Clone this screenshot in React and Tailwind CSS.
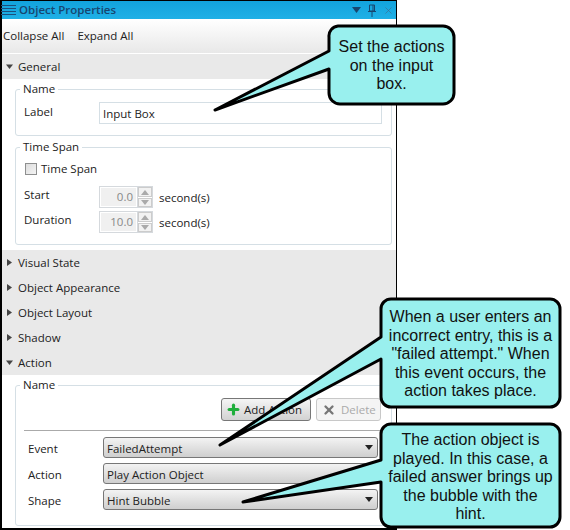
import { Plus, X } from 'lucide-react';

const uiFont = "font-['Open_Sans',sans-serif] text-[11.5px] text-[#222]";
const calloutText = "absolute text-center font-['Liberation_Sans',sans-serif] text-[16px] leading-[18.5px] text-[#111]";

function SectionHeader({ label, open }) {
    return (
        <div className="flex h-[25px] items-center bg-[#e9e9e9] pl-[3px]">
            {open ? (
                <svg width="9" height="9" viewBox="0 0 9 9" className="mr-[4px]"><path d="M1 2.5h7L4.5 7z" fill="#444" /></svg>
            ) : (
                <svg width="9" height="9" viewBox="0 0 9 9" className="mr-[4px]"><path d="M2 1v7l5-3.5z" fill="#444" /></svg>
            )}
            <span>{label}</span>
        </div>
    );
}

function Group({ title, className, children }) {
    return (
        <div className={`relative ml-[13px] mr-[4px] rounded-[3px] border border-[#d5dfe5] ${className}`}>
            <span className="absolute left-[4px] top-[-9px] bg-white px-[3px] leading-[16px]">{title}</span>
            {children}
        </div>
    );
}

function Spinner({ value }) {
    return (
        <div className="flex h-[22px] w-[54px] border border-[#d5d9dd] bg-white">
            <div className="m-px flex-1 bg-[#f0f0f0] pr-[3px] text-right leading-[18px] text-[#888]">{value}</div>
            <div className="flex w-[15px] flex-col gap-px border-l border-[#d5d9dd]">
                <div className="flex flex-1 items-center justify-center border border-[#ccc] bg-[#f2f2f2]">
                    <svg width="8" height="5" viewBox="0 0 8 5"><path d="M4 0l4 5H0z" fill="#aaa" /></svg>
                </div>
                <div className="flex flex-1 items-center justify-center border border-[#ccc] bg-[#f2f2f2]">
                    <svg width="8" height="5" viewBox="0 0 8 5"><path d="M0 0h8L4 5z" fill="#aaa" /></svg>
                </div>
            </div>
        </div>
    );
}

function SpinRow({ label, value, className }) {
    return (
        <div className={`flex items-center ${className}`}>
            <span className="mt-[-6px] w-[83px] pl-[8px]">{label}</span>
            <Spinner value={value} />
            <span className="ml-[6px]">second(s)</span>
        </div>
    );
}

function Select({ label, value, className }) {
    return (
        <div className={`flex items-center ${className}`}>
            <span className="w-[87px] pl-[12px] pt-[2px]">{label}</span>
            <div className="flex h-[21px] w-[275px] items-center justify-between rounded-[3px] border border-[#777] bg-gradient-to-b from-[#f3f3f3] to-[#cfcfcf] pl-[3px] pr-[4px]">
                <span className="pt-[2px]">{value}</span>
                <svg width="8" height="5" viewBox="0 0 8 5"><path d="M0 0h8L4 5z" fill="#222" /></svg>
            </div>
        </div>
    );
}

export default function App() {
    return (
        <div className="relative h-[530px] w-[570px] overflow-hidden bg-white">
            {/* Panel */}
            <div className={`flex h-[530px] w-[397px] flex-col border-b-2 border-l-2 border-r border-black ${uiFont}`}>
                <div className="flex h-[19px] shrink-0 items-center border-t border-black bg-gradient-to-b from-[#12a3dd] to-[#1fb0e6] pr-[2px]">
                    <div className="ml-[-1px] flex w-[15px] flex-col gap-[2px]">
                        <div className="h-px bg-[#1c4f7c]" />
                        <div className="h-px bg-[#1c4f7c]" />
                        <div className="h-px bg-[#1c4f7c]" />
                        <div className="h-px bg-[#1c4f7c]" />
                    </div>
                    <span className="ml-[3px] flex-1 font-semibold text-[#17466f]">Object Properties</span>
                    <svg width="9" height="6" viewBox="0 0 9 6" className="mr-[6px]"><path d="M0 0h9L4.5 6z" fill="#17466f" /></svg>
                    <svg width="10" height="13" viewBox="0 0 10 13" className="mr-[6px]"><path d="M2.5 1h5v6h-5zM1 7.5h8M5 8v5M6 1v6" fill="none" stroke="#17466f" /></svg>
                    <X size={11} strokeWidth={1.5} className="text-[#3c6f94]" />
                </div>

                <div className="flex h-[34px] shrink-0 items-center gap-[13px] bg-gradient-to-b from-white to-[#e8e8e8] pl-px">
                    <span>Collapse All</span>
                    <span>Expand All</span>
                </div>

                <div className="mt-px shrink-0 bg-[#e8e8e8]">
                    <SectionHeader label="General" open />
                </div>

                <div className="h-[171px] shrink-0 pt-[10px]">
                    <Group title="Name" className="h-[47px]">
                        <div className="flex items-center pt-[12px]">
                            <span className="mt-[-2px] w-[83px] pl-[8px]">Label</span>
                            <div className="h-[22px] w-[283px] border border-[#d5dfe5] pl-[3px] leading-[22px]">Input Box</div>
                        </div>
                    </Group>
                    <Group title="Time Span" className="mt-[11px] h-[98px]">
                        <div className="flex items-center pl-[9px] pt-[12px]">
                            <div className="h-[12px] w-[12px] border border-[#8e8f8f] bg-gradient-to-br from-[#ddd] to-[#f4f4f4]" />
                            <span className="ml-[4px]">Time Span</span>
                        </div>
                        <SpinRow label="Start" value="0.0" className="mt-[9px]" />
                        <SpinRow label="Duration" value="10.0" className="mt-[3px]" />
                    </Group>
                </div>

                <div className="shrink-0">
                    <SectionHeader label="Visual State" />
                    <SectionHeader label="Object Appearance" />
                    <SectionHeader label="Object Layout" />
                    <SectionHeader label="Shadow" />
                    <SectionHeader label="Action" open />
                </div>

                <div className="flex-1 pt-[10px]">
                    <Group title="Name" className="h-[141px]">
                        <div className="flex justify-end gap-[5px] pr-[10px] pt-[12px]">
                            <div className="flex h-[23px] w-[90px] items-center rounded-[3px] border border-[#777] bg-gradient-to-b from-[#f5f5f5] to-[#d2d2d2] pl-[4px]">
                                <Plus size={15} strokeWidth={5} className="text-[#1fae3c]" />
                                <span className="ml-[3px]">Add Action</span>
                            </div>
                            <div className="flex h-[23px] w-[65px] items-center rounded-[3px] border border-[#c8c8c8] bg-[#f4f4f4] pl-[5px] text-[#aaa]">
                                <X size={14} strokeWidth={4} className="text-[#777]" />
                                <span className="ml-[5px]">Delete</span>
                            </div>
                        </div>
                        <div className="ml-[8px] mr-[11px] mt-[9px] h-px bg-[#aaa]" />
                        <Select label="Event" value="FailedAttempt" className="mt-[6px]" />
                        <Select label="Action" value="Play Action Object" className="mt-[5px]" />
                        <Select label="Shape" value="Hint Bubble" className="mt-[5px]" />
                    </Group>
                </div>
            </div>

            {/* Callout shapes */}
            <svg width="570" height="530" viewBox="0 0 570 530" className="absolute left-0 top-0">
                <g fill="#99f0ee" stroke="#000" strokeWidth="3" strokeLinejoin="round">
                    <path d="M338 26H443a11 11 0 0 1 11 11V93a11 11 0 0 1-11 11H340a11 11 0 0 1-11-11V69L215 110 329 51V37a10 10 0 0 1 9-11z" />
                    <path d="M391 299H550a10 10 0 0 1 10 10V397a10 10 0 0 1-10 10H391a10 10 0 0 1-10-10V359L220 445 381 337V309a10 10 0 0 1 10-10z" />
                    <path d="M391 424H550a10 10 0 0 1 10 10V517a10 10 0 0 1-10 10H391a10 10 0 0 1-10-10V482L243 502 381 460V434a10 10 0 0 1 10-10z" />
                </g>
            </svg>

            {/* Callout text */}
            <div className={`${calloutText} left-[330px] top-[38px] w-[123px]`}>
                Set the actions<br />on the input<br />box.
            </div>
            <div className={`${calloutText} left-[383px] top-[308px] w-[175px]`}>
                When a user enters an<br />incorrect entry, this is a<br />"failed attempt." When<br />this event occurs, the<br />action takes place.
            </div>
            <div className={`${calloutText} left-[383px] top-[431px] w-[175px]`}>
                The action object is<br />played. In this case, a<br />failed answer brings up<br />the bubble with the<br />hint.
            </div>
        </div>
    );
}
